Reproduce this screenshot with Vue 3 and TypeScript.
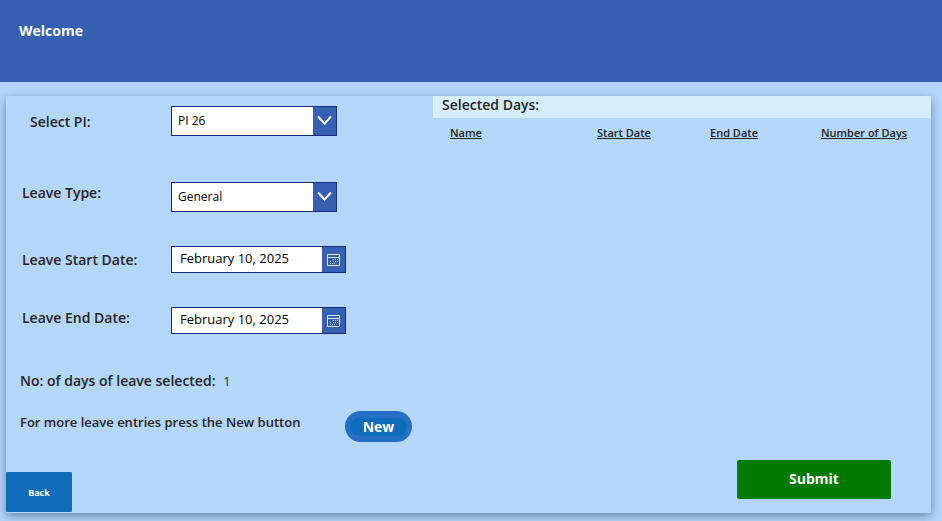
<script setup lang="ts">
import { computed, ref } from 'vue'

const projectIncrements: string[] = ['PI 26', 'PI 27', 'PI 28']
const leaveTypes: string[] = ['General', 'Sick', 'Vacation']
const columns: string[] = ['Name', 'Start Date', 'End Date', 'Number of Days']

const selectedPi = ref('PI 26')
const leaveType = ref('General')
const startDate = ref('February 10, 2025')
const endDate = ref('February 10, 2025')

const dayCount = computed<number>(() => {
  const span = Date.parse(endDate.value) - Date.parse(startDate.value)
  return Number.isNaN(span) ? 0 : Math.round(span / 86400000) + 1
})
</script>

<template>
  <div class="app">
    <header class="banner">
      <h1>Welcome</h1>
    </header>

    <main class="panel">
      <form class="entry" @submit.prevent>
        <div class="row row-pi">
          <label class="label inset" for="pi">Select PI:</label>
          <div class="combo">
            <select id="pi" v-model="selectedPi">
              <option v-for="pi in projectIncrements" :key="pi">{{ pi }}</option>
            </select>
            <span class="arrow" aria-hidden="true">
              <svg viewBox="0 0 23 28"><path d="M5 9.5 L11.5 16.5 L18 9.5" /></svg>
            </span>
          </div>
        </div>

        <div class="row row-type">
          <label class="label" for="type">Leave Type:</label>
          <div class="combo">
            <select id="type" v-model="leaveType">
              <option v-for="kind in leaveTypes" :key="kind">{{ kind }}</option>
            </select>
            <span class="arrow" aria-hidden="true">
              <svg viewBox="0 0 23 28"><path d="M5 9.5 L11.5 16.5 L18 9.5" /></svg>
            </span>
          </div>
        </div>

        <div class="row row-date">
          <label class="label" for="start">Leave Start Date:</label>
          <div class="date">
            <input id="start" v-model="startDate" type="text" />
            <button type="button" aria-label="Open start date calendar">
              <svg viewBox="0 0 13 12">
                <path class="frame" d="M.5 .5h12v11h-12z M.5 3.5h12" />
                <path class="days" d="M6 5.5h1M8 5.5h1M10 5.5h1M3 7.5h1M6 7.5h1M8 7.5h1M10 7.5h1M3 9.5h1M5 9.5h1M7 9.5h1" />
              </svg>
            </button>
          </div>
        </div>

        <div class="row row-date">
          <label class="label" for="end">Leave End Date:</label>
          <div class="date">
            <input id="end" v-model="endDate" type="text" />
            <button type="button" aria-label="Open end date calendar">
              <svg viewBox="0 0 13 12">
                <path class="frame" d="M.5 .5h12v11h-12z M.5 3.5h12" />
                <path class="days" d="M6 5.5h1M8 5.5h1M10 5.5h1M3 7.5h1M6 7.5h1M8 7.5h1M10 7.5h1M3 9.5h1M5 9.5h1M7 9.5h1" />
              </svg>
            </button>
          </div>
        </div>

        <p class="count">
          <span>No: of days of leave selected:</span>
          <output>{{ dayCount }}</output>
        </p>

        <div class="more">
          <span class="hint">For more leave entries press the New button</span>
          <button class="new" type="button"><span>New</span></button>
        </div>

        <button class="back" type="button">Back</button>
      </form>

      <section class="summary">
        <h2>Selected Days:</h2>
        <table>
          <thead>
            <tr>
              <th v-for="column in columns" :key="column" scope="col">{{ column }}</th>
            </tr>
          </thead>
        </table>
        <button class="submit" type="button">Submit</button>
      </section>
    </main>
  </div>
</template>

<style>
body {
  margin: 0;
  background: #b4d6fa;
}
</style>

<style scoped>
.app {
  display: flex;
  flex-direction: column;
  min-height: 100vh;
  box-sizing: border-box;
  padding-bottom: 8px;
  overflow: hidden;
  background: #b4d6fa;
  color: #242424;
  font-family: "Open Sans", "Noto Sans", sans-serif;
  font-size: 14px;
  line-height: 20px;
}

button,
input,
select {
  margin: 0;
  border: 0;
  border-radius: 0;
  font-family: inherit;
}

button {
  padding: 0;
  color: #fff;
  cursor: pointer;
}

.banner {
  padding: 21px 19px 41px;
  background: #3760b2;
}

.banner h1 {
  margin: 0;
  color: #fff;
  font-size: 14px;
  font-weight: 700;
  line-height: 20px;
}

.panel {
  flex: 1;
  display: grid;
  grid-template-columns: 427fr 498fr;
  margin: 14px 11px 0 6px;
  border-radius: 2px;
  background: #b4d6fa;
  box-shadow: 0 3px 10px rgba(30, 50, 80, 0.5);
}

.entry {
  display: flex;
  flex-direction: column;
  padding-top: 10px;
}

.row {
  display: grid;
  grid-template-columns: 149px auto;
  justify-content: start;
  align-items: center;
  padding-left: 16px;
}

.row-pi {
  margin-bottom: 46px;
}

.row-type,
.row-date {
  margin-bottom: 34px;
}

.label,
.count,
.hint {
  font-weight: 600;
}

.row-type .label {
  padding-bottom: 8px;
}

.row-date:nth-of-type(4) .label {
  padding-bottom: 6px;
}

.inset {
  padding: 2px 0 0 8px;
}

.combo,
.date {
  display: flex;
  box-sizing: border-box;
  border: 1px solid #152a80;
  background: #fff;
}

.combo {
  position: relative;
  width: 166px;
  height: 30px;
}

.combo select {
  appearance: none;
  flex: 1;
  padding: 0 30px 2px 6px;
  background: transparent;
  color: #000;
  font-size: 12px;
}

.arrow {
  position: absolute;
  top: 0;
  right: 0;
  bottom: 0;
  width: 23px;
  background: #3760b2;
  pointer-events: none;
}

.arrow svg {
  display: block;
  width: 23px;
  height: 28px;
  fill: none;
  stroke: #fff;
  stroke-width: 2;
}

.date {
  width: 175px;
  height: 27px;
}

.date input {
  flex: 1;
  min-width: 0;
  padding: 0 8px 4px;
  background: transparent;
  color: #000;
  font-size: 13px;
}

.date button {
  display: grid;
  place-items: center;
  width: 23px;
  background: #3760b2;
}

.date svg {
  width: 13px;
  height: 12px;
  fill: none;
  stroke: #dce6fa;
}

.date .days {
  stroke: #b9c9ec;
}

.count {
  display: flex;
  gap: 8px;
  margin: 3px 0 20px;
  padding-left: 14px;
}

.count output {
  font-size: 12px;
  font-weight: 400;
  line-height: 22px;
}

.count {
  height: 20px;
}

.more {
  display: flex;
  justify-content: space-between;
  padding: 0 21px 0 14px;
}

.hint {
  font-size: 13px;
  line-height: 22px;
}

.new {
  display: grid;
  place-items: center;
  width: 67px;
  height: 31px;
  border-radius: 16px;
  background: #276fc4;
}

.new span {
  padding: 0 13px;
  border-radius: 9px;
  background: #0f6cbd;
  font-size: 14px;
  font-weight: 700;
  line-height: 18px;
}

.back {
  width: 66px;
  height: 40px;
  margin: auto 0 1px;
  border-radius: 1px;
  background: #0f6cbd;
  font-size: 9px;
  font-weight: 700;
}

.summary {
  display: flex;
  flex-direction: column;
}

.summary h2 {
  margin: 0 0 6px;
  padding: 0 9px 4px;
  background: #d5eefb;
  font-size: 14px;
  font-weight: 600;
  line-height: 18px;
}

table {
  width: 100%;
  table-layout: fixed;
  border-collapse: collapse;
}

th {
  padding: 0 0 0 17px;
  font-size: 11px;
  font-weight: 600;
  line-height: 18px;
  text-align: left;
  text-decoration: underline;
  white-space: nowrap;
}

th:nth-child(1) {
  width: 130px;
}

th:nth-child(2) {
  width: 96px;
}

th:nth-child(3) {
  width: 94px;
}

.submit {
  align-self: flex-end;
  width: 154px;
  height: 39px;
  margin: auto 40px 14px 0;
  padding-bottom: 2px;
  border-radius: 2px;
  background: #007a00;
  font-size: 14px;
  font-weight: 700;
}
</style>
